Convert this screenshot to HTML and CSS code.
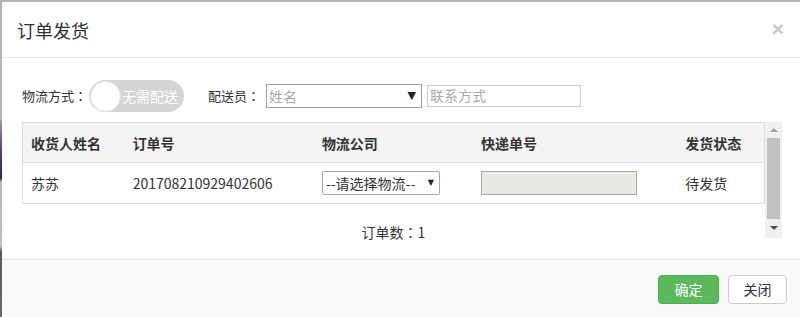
FILE: index.html
```html
<!DOCTYPE html>
<html lang="zh-CN">
<head>
<meta charset="utf-8">
<title>订单发货</title>
<link rel="stylesheet" href="styles.css">
</head>
<body>
<div class="modal">
  <div class="modal-header">
    <h4 class="modal-title">订单发货</h4>
    <span class="close">×</span>
  </div>
  <div class="modal-body">
    <div class="filter-row">
      <span class="label">物流方式<span class="colon" lang="zh-TW">：</span></span>
      <div class="toggle"><span class="knob"></span><span class="toggle-text">无需配送</span></div>
      <span class="label label-gap">配送员<span class="colon" lang="zh-TW">：</span></span>
      <div class="select-box"><span class="ph">姓名</span><span class="arrow">▼</span></div>
      <div class="input-box ph">联系方式</div>
    </div>
    <div class="scroll-area">
      <div class="scroll-content">
        <table class="grid">
          <colgroup>
            <col class="c1"><col class="c2"><col class="c3"><col class="c4"><col class="c5">
          </colgroup>
          <thead>
            <tr><th>收货人姓名</th><th>订单号</th><th>物流公司</th><th>快递单号</th><th>发货状态</th></tr>
          </thead>
          <tbody>
            <tr>
              <td>苏苏</td>
              <td>201708210929402606</td>
              <td><div class="cell-select"><span>--请选择物流--</span><span class="small-arrow">▼</span></div></td>
              <td><div class="cell-input"></div></td>
              <td>待发货</td>
            </tr>
          </tbody>
        </table>
        <div class="count">订单数<span class="colon" lang="zh-TW">：</span>1</div>
      </div>
      <div class="scrollbar">
        <span class="sb-up"></span>
        <div class="sb-thumb"></div>
        <span class="sb-down"></span>
      </div>
    </div>
  </div>
  <div class="modal-footer">
    <button class="btn btn-ok">确定</button>
    <button class="btn btn-close">关闭</button>
  </div>
</div>
</body>
</html>
```
FILE: styles.css
```css
* { box-sizing: border-box; }
html, body { height: 100%; }
body {
  margin: 0;
  padding: 2px 0 0 2px;
  overflow: hidden;
  font-family: "Noto Sans CJK SC", "Noto Sans", sans-serif;
  color: #333;
  background: linear-gradient(to bottom, #b4b4b4 0, #b4b4b4 118px, #9a8aa8 124px, #5a3f86 150px, #2d1e5e 178px, #b8b8b8 182px, #c0c0c0 246px, #5a5a5a 252px, #6a6a6a 317px);
}
.modal {
  width: 798px;
  height: 315px;
  background: #fff;
  display: flex;
  flex-direction: column;
}
.modal-header {
  display: flex;
  justify-content: space-between;
  align-items: center;
  padding: 15px 16px 15px 15px;
  border-bottom: 1px solid #e5e5e5;
  height: 56px;
}
.modal-title {
  margin: 0;
  font-size: 18px;
  font-weight: normal;
  line-height: 26px;
  color: #333;
}
.close {
  font-family: "Liberation Sans", Arial, sans-serif;
  font-size: 21px;
  font-weight: bold;
  color: #c8c8c8;
  line-height: 1;
  margin-top: -2px;
}
.colon {
  font-family: "Noto Sans CJK TC", "Noto Sans CJK SC", sans-serif;
}
.modal-body {
  height: 201px;
  padding: 22px 18px 0 20px;
}
.filter-row {
  display: flex;
  align-items: center;
  height: 32px;
}
.label {
  font-size: 13px;
  line-height: 18px;
  color: #333;
}
.label-gap { margin-left: 24px; margin-right: 6px; }
.toggle {
  margin-left: 2px;
  width: 95px;
  height: 32px;
  border-radius: 16px;
  background: #d5d5d5;
  display: flex;
  align-items: center;
  padding-left: 1px;
}
.knob {
  width: 31px;
  height: 31px;
  border-radius: 50%;
  background: #fff;
  border: 1px solid #e4e4e4;
  flex: none;
}
.toggle-text {
  color: #fff;
  font-size: 14px;
  margin-left: 1px;
  line-height: 18px;
}
.ph { color: #a9a9a9; font-size: 14px; }
.select-box {
  width: 156px;
  height: 24px;
  border: 1px solid #a0a0a0;
  display: flex;
  align-items: center;
  justify-content: space-between;
  padding: 0 5px 0 2px;
  line-height: 20px;
}
.arrow {
  color: #222;
  font-size: 11px;
  font-family: "DejaVu Sans", sans-serif;
}
.input-box {
  margin-left: 5px;
  width: 154px;
  height: 22px;
  border: 1px solid #ccc;
  padding: 0 2px;
  line-height: 19px;
}
.scroll-area {
  margin-top: 10px;
  display: flex;
  height: 116px;
}
.scroll-content {
  width: 743px;
}
.grid {
  width: 743px;
  table-layout: fixed;
  border-collapse: collapse;
  border: 1px solid #ddd;
  font-size: 14px;
}
.c1 { width: 102px; }
.c2 { width: 189px; }
.c3 { width: 159px; }
.c4 { width: 204px; }
.c5 { width: 87px; }
.grid th {
  background: #f4f4f4;
  height: 40px;
  text-align: left;
  font-weight: bold;
  padding: 0 0 0 8px;
  border-bottom: 1px solid #ddd;
  color: #333;
}
.grid td {
  height: 41px;
  padding: 0 0 0 8px;
  color: #333;
  white-space: nowrap;
}
.cell-select {
  width: 118px;
  height: 24px;
  border: 1px solid #a9a9a9;
  border-radius: 2px;
  display: flex;
  align-items: center;
  justify-content: space-between;
  padding: 0 5px 0 3px;
  font-size: 14px;
  line-height: 20px;
}
.small-arrow {
  font-size: 8px;
  color: #222;
  font-family: "DejaVu Sans", sans-serif;
}
.cell-input {
  width: 156px;
  height: 24px;
  background: #ebe9e3;
  border: 1px solid #a9a9a9;
}
.count {
  text-align: center;
  font-size: 14px;
  line-height: 18px;
  margin-top: 19px;
}
.scrollbar {
  width: 17px;
  height: 116px;
  background: #f0f0f0;
  display: flex;
  flex-direction: column;
  align-items: center;
}
.sb-up {
  margin-top: 6px;
  width: 0; height: 0;
  border-left: 4px solid transparent;
  border-right: 4px solid transparent;
  border-bottom: 4px solid #a3a3a3;
}
.sb-thumb {
  margin-top: 6px;
  width: 13px;
  height: 81px;
  background: #c1c1c1;
}
.sb-down {
  margin-top: 7px;
  width: 0; height: 0;
  border-left: 4px solid transparent;
  border-right: 4px solid transparent;
  border-top: 4px solid #505050;
}
.modal-footer {
  flex: 1;
  border-top: 1px solid #e5e5e5;
  background: #f9f9f9;
  display: flex;
  justify-content: flex-end;
  align-items: flex-start;
  padding: 15px 13px 0 0;
  gap: 9px;
}
.btn {
  font-family: "Noto Sans CJK SC", sans-serif;
  font-size: 14px;
  line-height: 19px;
  height: 29px;
  padding: 4px 0;
  text-align: center;
  white-space: nowrap;
  border-radius: 4px;
  border: 1px solid #ccc;
  background: #fff;
  color: #333;
}
.btn-ok {
  width: 61px;
  background: #5cb85c;
  border-color: #4cae4c;
  color: #fff;
}
.btn-close { width: 59px; }
```
